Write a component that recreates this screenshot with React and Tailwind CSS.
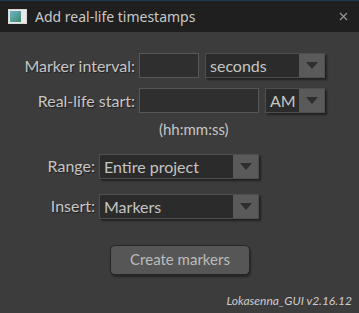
const font = { fontFamily: 'Lato, "Open Sans", sans-serif' }

const Arrow = () => (
  <svg width="12" height="7" viewBox="0 0 12 7">
    <path d="M0 0 H12 L6 7 Z" fill="#2e2e2e" />
  </svg>
)

const Select = ({ value, width, arrowW = 25 }) => (
  <div
    className="flex h-[25px] border border-[#4e4e4e] shadow-[2px_2px_2px_rgba(0,0,0,0.45)]"
    style={{ width }}
  >
    <div className="flex-1 bg-[#2b2b2b] pl-[4px] text-[16px] leading-[23px] text-[#c4c4c4]">
      {value}
    </div>
    <div
      className="flex items-center justify-center bg-[#5a5a5a]"
      style={{ width: arrowW }}
    >
      <Arrow />
    </div>
  </div>
)

const TextBox = ({ width }) => (
  <div
    className="h-[25px] border border-[#575757] bg-[#2f2f2f]"
    style={{ width }}
  />
)

const Label = ({ width, children }) => (
  <div
    className="shrink-0 pr-[4px] text-right text-[16px] text-[#c6c6c6] [text-shadow:1px_1px_1px_rgba(0,0,0,0.5)]"
    style={{ width }}
  >
    {children}
  </div>
)

export default function App() {
  return (
    <div className="flex h-[313px] w-[359px] flex-col bg-[#3c3c3c]" style={font}>
      <div className="flex h-[32px] shrink-0 items-center border-t border-[#1d3a58] bg-[#1f1f1f] pl-[8px] pr-[11px]">
        <div className="flex h-[15px] w-[19px] border border-[#d8d8d8] bg-[#e8e8e8]">
          <div className="m-[1px] w-[11px] bg-gradient-to-br from-[#6fb3c8] to-[#3f8a6a]" />
        </div>
        <div
          className="ml-[8px] flex-1 text-[14px] text-[#c8c8c8]"
          style={{ fontFamily: '"Noto Sans", sans-serif' }}
        >
          Add real-life timestamps
        </div>
        <svg width="9" height="9" viewBox="0 0 9 9">
          <path d="M1 1 L8 8 M8 1 L1 8" stroke="#9a9a9a" strokeWidth="1.1" />
        </svg>
      </div>

      <div className="flex flex-col pt-[21px]">
        <div className="flex h-[25px] items-center">
          <Label width={139}>Marker interval:</Label>
          <TextBox width={60} />
          <div className="ml-[6px]">
            <Select value="seconds" width={120} />
          </div>
        </div>

        <div className="mt-[10px] flex h-[25px] items-center">
          <Label width={139}>Real-life start:</Label>
          <TextBox width={120} />
          <div className="ml-[6px]">
            <Select value="AM" width={60} />
          </div>
        </div>

        <div className="mt-[5px] pl-[159px] text-[15px] text-[#c6c6c6]">
          (hh:mm:ss)
        </div>

        <div className="mt-[13px] flex h-[25px] items-center">
          <Label width={99}>Range:</Label>
          <Select value="Entire project" width={160} />
        </div>

        <div className="mt-[15px] flex h-[25px] items-center">
          <Label width={99}>Insert:</Label>
          <Select value="Markers" width={160} />
        </div>

        <div className="mt-[26px] pl-[110px]">
          <div className="flex h-[30px] w-[140px] items-center justify-center rounded-[5px] border border-[#262626] bg-[#565656] text-[15px] text-[#bcbcbc] shadow-[1px_2px_2px_rgba(0,0,0,0.4)]">
            Create markers
          </div>
        </div>

        <div className="mt-[17px] pr-[7px] text-right text-[12px] italic text-[#cccccc]">
          Lokasenna_GUI v2.16.12
        </div>
      </div>
    </div>
  )
}
